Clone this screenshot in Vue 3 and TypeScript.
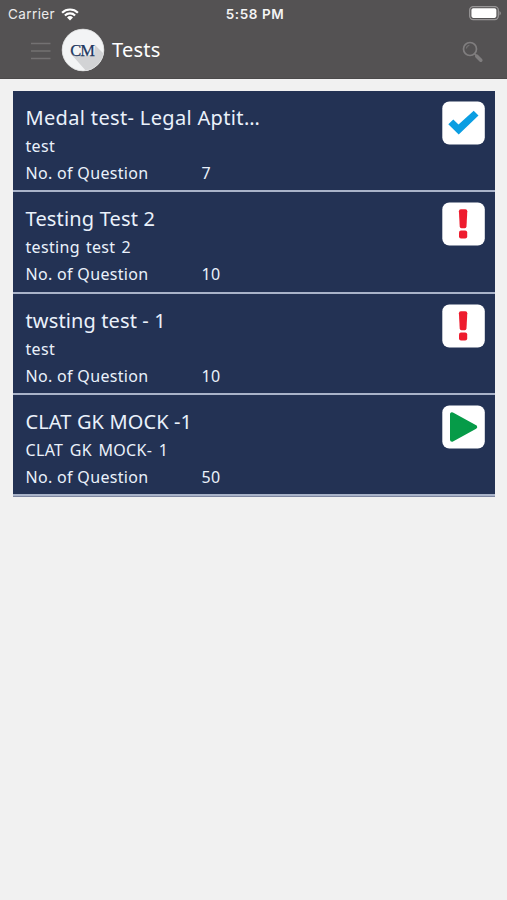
<script setup lang="ts">
type Status = 'done' | 'pending' | 'play'

interface TestItem {
  title: string
  subtitle: string
  questions: number
  status: Status
  titleSpacing: string
  subtitleGap: string
}

const tests: TestItem[] = [
  { title: 'Medal test- Legal Aptit…', subtitle: 'test', questions: 7, status: 'done', titleSpacing: '0.34px', subtitleGap: '0px' },
  { title: 'Testing Test 2', subtitle: 'testing test 2', questions: 10, status: 'pending', titleSpacing: '0.17px', subtitleGap: '1.6px' },
  { title: 'twsting test - 1', subtitle: 'test', questions: 10, status: 'pending', titleSpacing: '0.12px', subtitleGap: '0px' },
  { title: 'CLAT GK MOCK -1', subtitle: 'CLAT GK MOCK- 1', questions: 50, status: 'play', titleSpacing: '0.12px', subtitleGap: '2px' },
]
</script>

<template>
  <div class="screen">
    <header class="header">
      <div class="status">
        <div class="carrier">
          <span>Carrier</span>
          <svg class="wifi" width="18" height="13" viewBox="0 0 18 13">
            <g fill="none" stroke="#fff" stroke-width="2.2">
              <path d="M1.1 4.7a11.4 11.4 0 0 1 15.8 0" />
              <path d="M3.9 7.5a7.4 7.4 0 0 1 10.2 0" />
            </g>
            <path d="M6 9.5a4.3 4.3 0 0 1 6 0L9 12.5z" fill="#fff" />
          </svg>
        </div>
        <div class="clock">5:58 PM</div>
        <svg class="battery" width="33" height="16" viewBox="0 0 33 16">
          <rect x="0" y=".6" width="28.6" height="13" rx="3.5" fill="none" stroke="#989697" stroke-width="1.3" transform="translate(.7 0)" />
          <rect x="2.4" y="2.3" width="25" height="9.6" rx="1.8" fill="#fff" />
          <path d="M30.5 5c1.8.8 1.8 3.6 0 4.4z" fill="#989697" />
        </svg>
      </div>
      <div class="nav">
        <svg class="menu" width="20" height="18" viewBox="0 0 20 18">
          <path d="M0 1.5h19.5M0 9h19.5M0 16.5h19.5" stroke="#737172" stroke-width="1.4" />
        </svg>
        <svg class="logo" width="44" height="44" viewBox="0 0 44 44">
          <defs>
            <clipPath id="disc"><circle cx="22" cy="22" r="21" /></clipPath>
          </defs>
          <circle cx="22" cy="22" r="21" fill="#f3f4f5" />
          <path d="M10 26l6 2 17-1 1-10 18 18-18 18z" fill="#d2d3d5" clip-path="url(#disc)" />
          <circle cx="22" cy="22" r="20.8" fill="none" stroke="#dedfe0" stroke-width=".8" />
          <text x="9.2" y="27.6" class="mark">CM</text>
        </svg>
        <h1>Tests</h1>
        <svg class="search" width="22" height="22" viewBox="0 0 22 22">
          <circle cx="8" cy="8" r="6.5" fill="none" stroke="#807e7f" stroke-width="1.7" />
          <path d="M4.4 7.5a3.7 3.7 0 0 1 3-3.2" fill="none" stroke="#747273" stroke-width="1.1" />
          <path d="M12.6 12.8l1.8 1.9" stroke="#807e7f" stroke-width="1.5" />
          <path d="M14.8 15.2l4 4" stroke="#807e7f" stroke-width="3.6" stroke-linecap="round" />
        </svg>
      </div>
    </header>

    <main class="list">
      <article v-for="t in tests" :key="t.title" class="row">
        <div class="text">
          <h2 :style="{ letterSpacing: t.titleSpacing }">{{ t.title }}</h2>
          <p class="sub" :style="{ wordSpacing: t.subtitleGap }">{{ t.subtitle }}</p>
          <p class="count"><span class="label">No. of Question</span><span class="num">{{ t.questions }}</span></p>
        </div>
        <svg class="badge" width="44" height="44" viewBox="0 0 44 44">
          <rect x=".3" y=".5" width="42.5" height="43" rx="7" fill="#fff" />
          <path v-if="t.status === 'done'" d="M6.3 23.3l5-4.9 5.2 5.2L31.7 9.8l4.8 4.8L16.7 33.6z" fill="#0b9ee2" />
          <g v-else-if="t.status === 'pending'" fill="#ee1c2e">
            <path d="M16.9 9.2q0-1.9 2-1.9h4.4q2 0 2 1.9l-.8 15q-.2 2-1.7 2h-3.4q-1.5 0-1.7-2z" />
            <rect x="17" y="28.6" width="8.2" height="8" rx="2" />
          </g>
          <path v-else d="M10 9.3v25.4L33.2 22z" fill="#069b48" stroke="#069b48" stroke-width="4" stroke-linejoin="round" />
        </svg>
      </article>
    </main>
  </div>
</template>

<style>
body {
  background: #f1f1f1;
}
</style>

<style scoped>
.screen {
  min-height: 900px;
  background: #f1f1f1;
  font-family: "Noto Sans", "Open Sans", sans-serif;
}
.header {
  box-sizing: border-box;
  height: 79px;
  background: #545253;
  border-bottom: 1px solid #4b494a;
  color: #fff;
}
.status {
  display: grid;
  grid-template-columns: 1fr auto 1fr;
  align-items: center;
  height: 28px;
  padding: 0 5px 0 8px;
  font-family: Inter, sans-serif;
  font-size: 13.5px;
}
.carrier {
  display: flex;
  align-items: center;
  gap: 6px;
  color: #ececec;
  letter-spacing: 0.4px;
}
.clock {
  font-weight: 600;
  letter-spacing: 0.6px;
  color: #f4f4f4;
}
.battery {
  justify-self: end;
}
.nav {
  display: flex;
  align-items: center;
  height: 44px;
  padding: 0 23px 0 31px;
}
.menu {
  margin-top: 2px;
}
.logo {
  margin-left: 10px;
}
.mark {
  font-family: "Liberation Serif", serif;
  font-size: 16.5px;
  letter-spacing: -1px;
  fill: #22375f;
  stroke: #22375f;
  stroke-width: 0.25px;
}
h1 {
  margin: 0 auto 0 7px;
  font-size: 20px;
  font-weight: 400;
  line-height: 44px;
  letter-spacing: 0.25px;
}
.search {
  margin-top: 4px;
}
.list {
  margin: 12px 12px 0 13px;
  border-bottom: 1px solid #7d86a0;
}
.row {
  box-sizing: border-box;
  display: flex;
  justify-content: space-between;
  height: 101.3px;
  padding: 10px 9px 0 12.5px;
  border-bottom: 2px solid #a9b3c9;
  background: #233254;
  color: #eaf1fb;
}
h2 {
  margin: 0;
  font-size: 20px;
  font-weight: 400;
  line-height: 33px;
  white-space: nowrap;
}
p {
  margin: 0;
  font-size: 16px;
  line-height: 27px;
  letter-spacing: 0.32px;
  white-space: nowrap;
}
.sub {
  line-height: 24px;
}
.count {
  display: flex;
  line-height: 30px;
}
.label {
  width: 176px;
}
</style>
